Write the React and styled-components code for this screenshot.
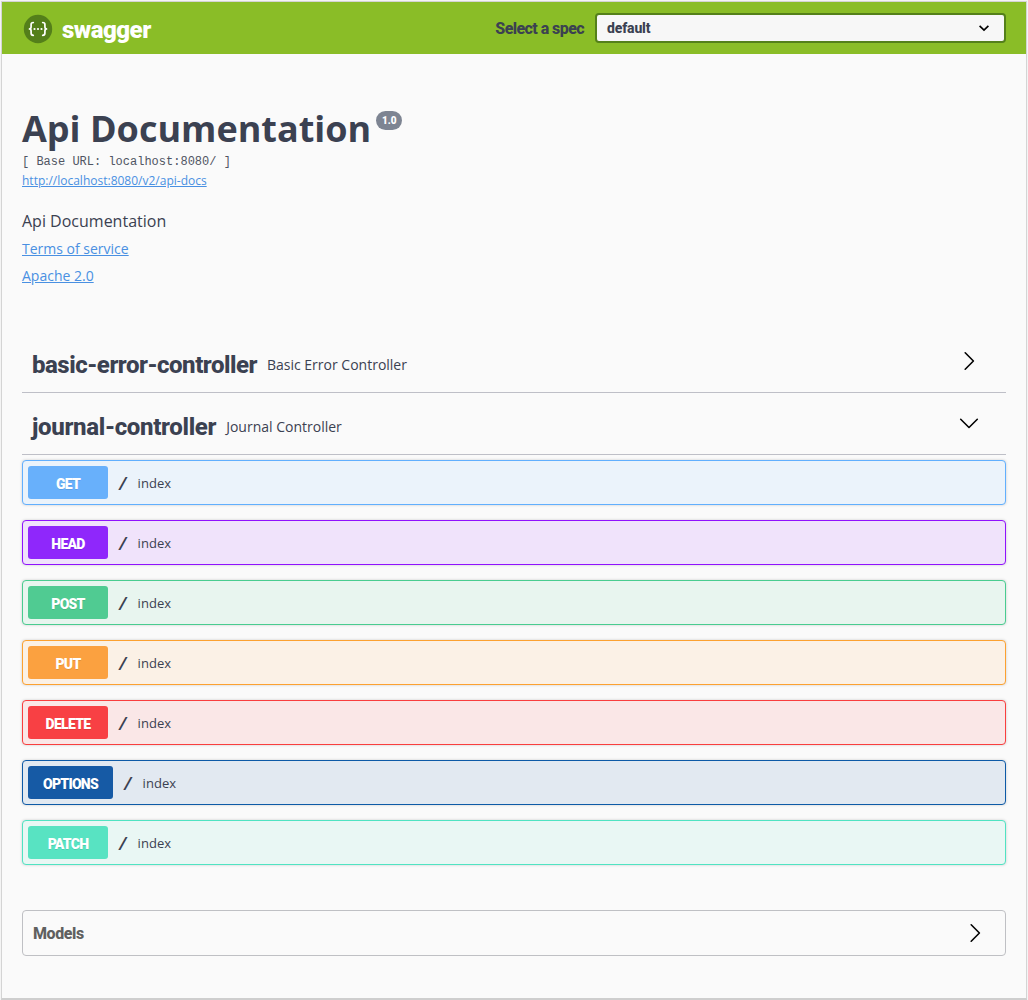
import React from "react";
import styled, { createGlobalStyle } from "styled-components";

const ink = "#3b4151";
const body = '"Open Sans", sans-serif';
const display = 'Roboto, "Open Sans", sans-serif';
const mono = '"Liberation Mono", monospace';

const GlobalStyle = createGlobalStyle`
  *, *::before, *::after { box-sizing: border-box; }
  body { margin: 0; background: #fafafa; color: ${ink}; font-family: ${body}; }
  h1, h2, h3, p { margin: 0; }
`;

const Page = styled.div`
  height: 1000px;
  padding: 1px 1px 0;
  background: #f4f4f4;
`;
const Frame = styled.div`
  height: 999px;
  background: #fafafa;
  border: 1px solid #d4d4d4;
  border-bottom: 2px solid #cecece;
`;
const Topbar = styled.header`
  height: 52px;
  padding: 0 20px 0 21px;
  display: flex;
  align-items: center;
  justify-content: space-between;
  background: #8abd27;
`;
const Brand = styled.a`
  display: flex;
  align-items: center;
  gap: 9px;
  height: 52px;
`;
const Condensed = styled.span`
  display: inline-block;
  flex: none;
  padding-top: ${(p) => p.$drop || 0}px;
  font-family: ${display};
  font-weight: ${(p) => p.$weight || 800};
  font-size: ${(p) => p.$size}px;
  line-height: ${(p) => p.$line || p.$size + 6}px;
  letter-spacing: ${(p) => p.$track || 0}px;
  color: ${(p) => p.$color || ink};
  white-space: nowrap;
`;
const SpecPicker = styled.label`
  display: flex;
  align-items: center;
  gap: 11px;
`;
const Select = styled.div`
  width: 411px;
  height: 30px;
  padding: 0 14px 0 10px;
  display: flex;
  align-items: center;
  justify-content: space-between;
  background: #f7f7f7;
  border: 2px solid #54801a;
  border-radius: 4px;
`;
const Content = styled.main`
  padding: 50px 20px 0;
`;
const Info = styled.section`
  display: flex;
  flex-direction: column;
  align-items: flex-start;
  height: 234px;
`;
const TitleRow = styled.div`
  display: flex;
  gap: 5px;
`;
const Title = styled.h1`
  font-size: 36px;
  line-height: 49px;
  font-weight: 700;
`;
const Version = styled.small`
  display: flex;
  align-items: center;
  justify-content: center;
  width: 26px;
  height: 19px;
  margin-top: 7px;
  border-radius: 57px;
  background: #7d8492;
`;
const BaseUrl = styled.pre`
  margin: 0;
  font: 400 12px/18px ${mono};
  color: #505563;
`;
const Link = styled.a`
  color: #4990e2;
  text-decoration: underline;
  font-weight: 440;
  font-size: ${(p) => p.$size}px;
  line-height: ${(p) => p.$line}px;
`;
const Description = styled.p`
  margin-top: 17px;
  font-size: 16px;
  line-height: 27px;
`;
const TagHeader = styled.div`
  height: ${(p) => p.$height}px;
  padding: ${(p) => p.$top || 0}px 27px 0 10px;
  display: flex;
  align-items: center;
  border-bottom: 1px solid #bebfc7;
`;
const TagNote = styled.small`
  flex: 1;
  margin-left: 10px;
  font-size: 14px;
  line-height: 20px;
`;
const Operations = styled.div`
  display: flex;
  flex-direction: column;
  gap: 15px;
  padding-top: 5px;
`;
const Operation = styled.div`
  display: flex;
  align-items: center;
  height: 45px;
  padding: 0 5px;
  border: 1px solid ${(p) => p.$line};
  border-radius: 4px;
  background: ${(p) => p.$fill};
  box-shadow: 0 0 3px rgba(0, 0, 0, 0.19);
`;
const Method = styled.span`
  display: flex;
  align-items: center;
  justify-content: center;
  width: ${(p) => p.$width || 80}px;
  height: 33px;
  border-radius: 3px;
  background: ${(p) => p.$color};
  text-shadow: 0 1px 0 rgba(0, 0, 0, 0.1);
`;
const Path = styled.span`
  padding: 5px 9.4px 0;
  font: 700 18px/20px ${mono};
`;
const Summary = styled.span`
  font-size: 13px;
  line-height: 20px;
  letter-spacing: 0.05px;
`;
const Models = styled.section`
  display: flex;
  align-items: center;
  justify-content: space-between;
  height: 46px;
  margin-top: 45px;
  padding: 0 20px 0 10px;
  border: 1px solid #bfc0c4;
  border-radius: 4px;
`;
const Icon = styled.svg`
  flex: none;
  display: block;
  margin-top: ${(p) => p.$top || 0}px;
`;

function Logo() {
  return (
    <Icon width="30" height="30" viewBox="0 0 30 30" fill="none" $top={2}>
      <circle cx="15" cy="15" r="14.2" fill="#547f1a" />
      <g stroke="#fff" strokeWidth="1.7" strokeLinecap="round" strokeLinejoin="round">
        <path d="M10.3 8.5c-1.900 0-2.200.7-2.200 2v2c0 1.400-.4 2.400-1.600 2.400 1.200 0 1.600 1 1.600 2.400v2c0 1.300.3 2 2.200 2" />
        <path d="M19.700 8.500c1.900 0 2.200.7 2.200 2v2c0 1.400.4 2.400 1.600 2.400-1.200 0-1.600 1-1.600 2.400v2c0 1.300-.3 2-2.200 2" />
      </g>
      <g fill="#fff">
        <circle cx="11.500" cy="15" r="1.100" />
        <circle cx="15" cy="15" r="1.100" />
        <circle cx="18.500" cy="15" r="1.100" />
      </g>
    </Icon>
  );
}

function Chevron({ open, top }) {
  return (
    <Icon $top={top} width="20" height="20" viewBox="0 0 20 20" fill="none" stroke="#000" strokeWidth="1.6" strokeLinecap="round" strokeLinejoin="round">
      <path d={open ? "M1.700 6.300L10 14.500L18.300 6.300" : "M6.200 1.800L14.400 10L6.200 18.200"} />
    </Icon>
  );
}

const operations = [
  { name: "GET", color: "#61affe", badge: "#68b0fb", fill: "#ebf3fb" },
  { name: "HEAD", color: "#9012fe", badge: "#8f27fb", fill: "#f0e3fb" },
  { name: "POST", color: "#49cc90", badge: "#50cb92", fill: "#e8f5ef" },
  { name: "PUT", color: "#fca130", badge: "#fba140", fill: "#fbf1e6" },
  { name: "DELETE", color: "#f93e3e", badge: "#f84044", fill: "#fae7e7" },
  { name: "OPTIONS", color: "#0d5aa7", badge: "#165aa5", fill: "#e2e9f1", width: 85 },
  { name: "PATCH", color: "#50e3c2", badge: "#58e3c2", fill: "#e9f7f4" },
];

export default function App() {
  return (
    <Page>
      <GlobalStyle />
      <Frame>
        <Topbar>
          <Brand>
            <Logo />
            <Condensed $size={24} $line={30} $weight={900} $track={-0.5} $drop={3} $color="#fff">swagger</Condensed>
          </Brand>
          <SpecPicker>
            <Condensed $size={16} $track={-0.57} $drop={2}>Select a spec</Condensed>
            <Select>
              <Condensed $size={14} $track={-0.15}>default</Condensed>
              <Icon width="12" height="12" viewBox="0 0 12 12" fill="none" stroke="#000" strokeWidth="1.700">
                <path d="M1.600 3.900L6 8L10.400 3.900" />
              </Icon>
            </Select>
          </SpecPicker>
        </Topbar>
        <Content>
          <Info>
            <TitleRow>
              <Title>Api Documentation</Title>
              <Version><Condensed $size={10} $weight={900} $color="#fff">1.0</Condensed></Version>
            </TitleRow>
            <BaseUrl>[ Base URL: localhost:8080/ ]</BaseUrl>
            <Link $size={12} $line={20}>http://localhost:8080/v2/api-docs</Link>
            <Description>Api Documentation</Description>
            <Link $size={14} $line={27}>Terms of service</Link>
            <Link $size={14} $line={27}>Apache 2.0</Link>
          </Info>
          <TagHeader $height={55}>
            <Condensed $size={24} $track={-0.48}>basic-error-controller</Condensed>
            <TagNote>Basic Error Controller</TagNote>
            <Chevron top={-8} />
          </TagHeader>
          <TagHeader $height={62} $top={6}>
            <Condensed $size={24} $track={-0.32}>journal-controller</Condensed>
            <TagNote>Journal Controller</TagNote>
            <Chevron open top={-7} />
          </TagHeader>
          <Operations>
            {operations.map((op) => (
              <Operation key={op.name} $line={op.color} $fill={op.fill}>
                <Method $color={op.badge} $width={op.width}>
                  <Condensed $size={14} $weight={900} $track={-0.72} $drop={2} $color="#fff">{op.name}</Condensed>
                </Method>
                <Path>/</Path>
                <Summary>index</Summary>
              </Operation>
            ))}
          </Operations>
          <Models>
            <Condensed $size={16} $track={-0.4} $drop={2} $color="#606060">Models</Condensed>
            <Chevron />
          </Models>
        </Content>
      </Frame>
    </Page>
  );
}
